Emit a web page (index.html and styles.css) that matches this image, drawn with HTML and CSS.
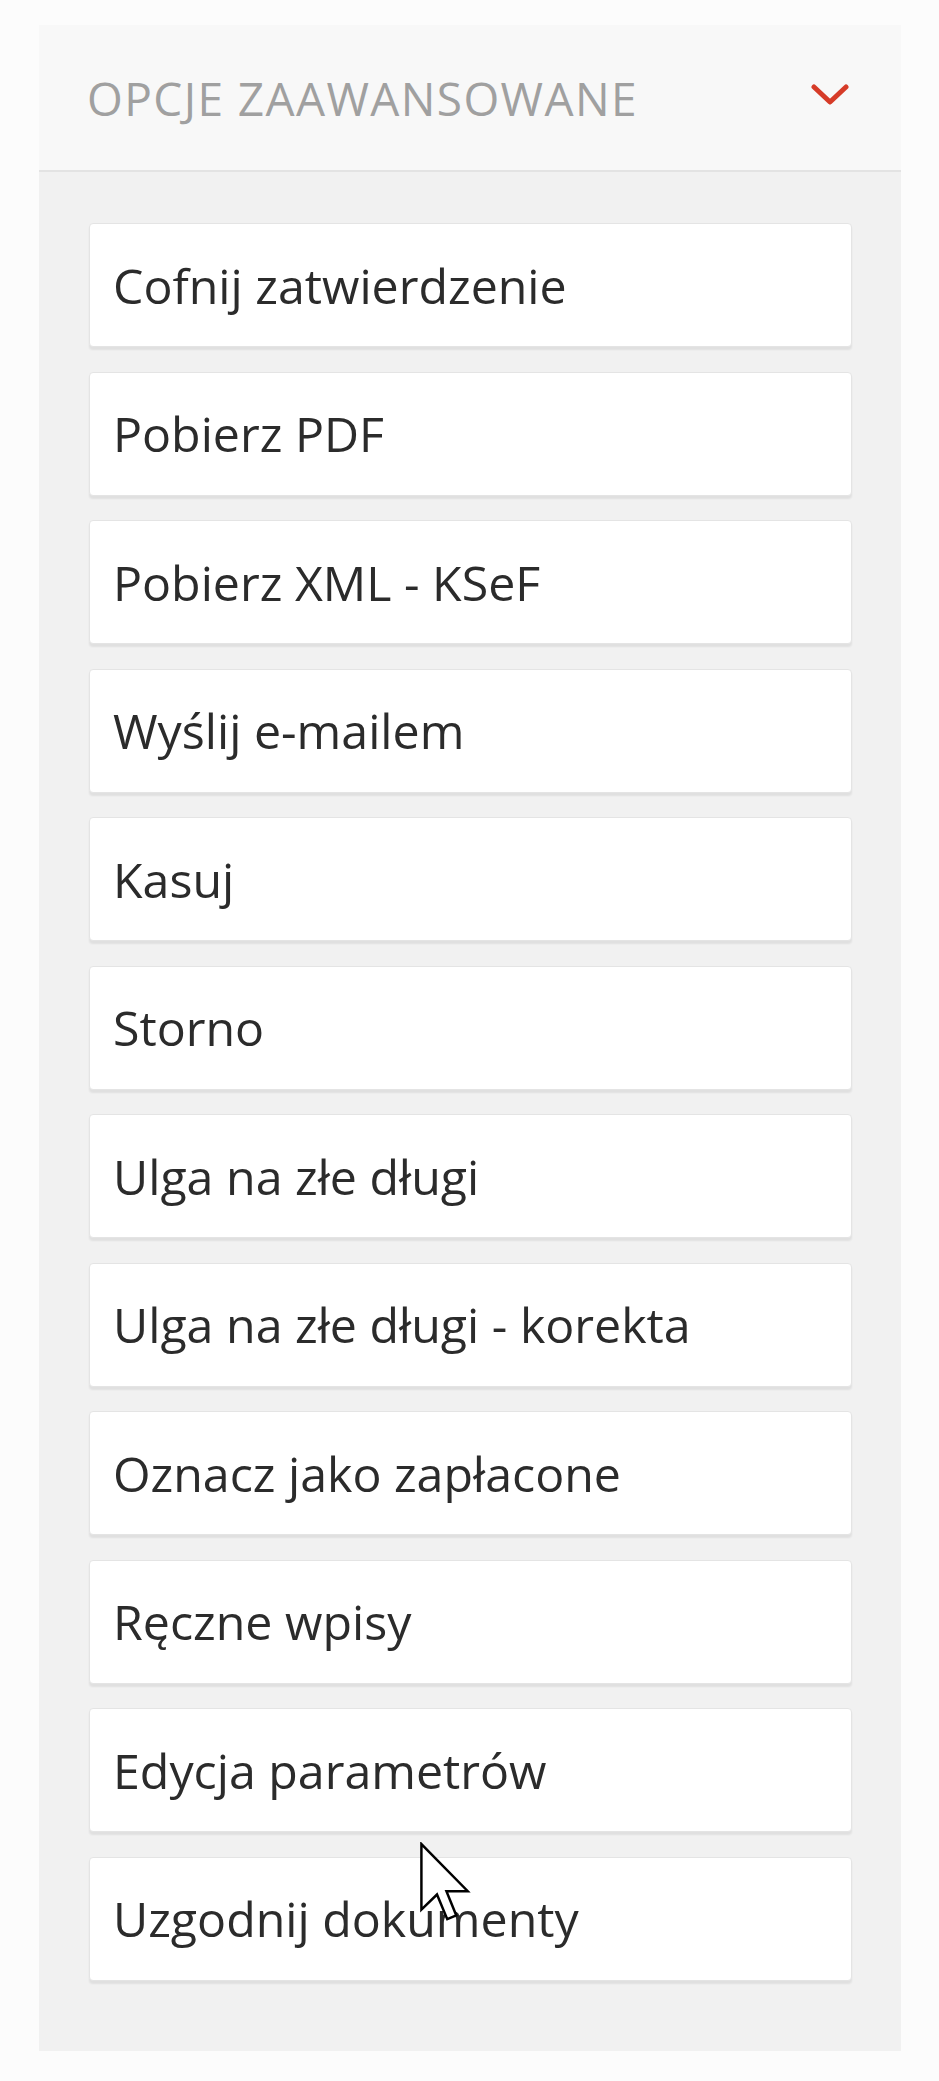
FILE: index.html
```html
<!DOCTYPE html>
<html lang="pl">
<head>
<meta charset="utf-8">
<title>Opcje zaawansowane</title>
<link rel="stylesheet" href="styles.css">
</head>
<body>
<div class="panel">
  <div class="header">
    <span class="title">OPCJE ZAAWANSOWANE</span>
    <svg class="chevron" width="38" height="22" viewBox="0 0 38 22"><path d="M3 3 L19 18 L35 3" fill="none" stroke="#d63b28" stroke-width="5" stroke-linecap="round" stroke-linejoin="round"/></svg>
  </div>
  <div class="list">
    <div class="btn">Cofnij zatwierdzenie</div>
    <div class="btn">Pobierz PDF</div>
    <div class="btn">Pobierz XML - KSeF</div>
    <div class="btn">Wyślij e-mailem</div>
    <div class="btn">Kasuj</div>
    <div class="btn">Storno</div>
    <div class="btn">Ulga na złe długi</div>
    <div class="btn">Ulga na złe długi - korekta</div>
    <div class="btn">Oznacz jako zapłacone</div>
    <div class="btn">Ręczne wpisy</div>
    <div class="btn">Edycja parametrów</div>
    <div class="btn">Uzgodnij dokumenty</div>
  </div>
</div>
<svg class="cursor" width="52" height="80" viewBox="0 0 12.5 19.5"><path d="M0.5 0.5 L0.5 16.5 L4.3 12.8 L6.8 18.8 L9 17.9 L6.6 12 L11.8 12 Z" fill="#fff" stroke="#000" stroke-width="0.6" stroke-linejoin="miter"/></svg>
</body>
</html>
```
FILE: styles.css
```css
html, body {
  margin: 0;
  padding: 0;
}
body {
  background: #fcfcfc;
  font-family: "Open Sans", "Liberation Sans", sans-serif;
  width: 939px;
  height: 2081px;
  overflow: hidden;
  position: relative;
}
.panel {
  margin: 25px 0 0 39px;
  width: 862px;
  background: #f1f1f1;
}
.header {
  height: 145px;
  background: #f8f8f8;
  border-bottom: 2px solid #e3e3e3;
  display: flex;
  align-items: center;
  justify-content: space-between;
  padding: 0 52px 0 48px;
}
.title {
  font-size: 46px;
  color: #a0a0a0;
  letter-spacing: 1.4px;
  line-height: 1;
}
.chevron {
  display: block;
  margin-top: -5px;
}
.list {
  display: flex;
  flex-direction: column;
  gap: 24.5px;
  padding: 51px 49px 70px 50px;
}
.btn {
  box-sizing: border-box;
  height: 124px;
  background: #fff;
  border: 1px solid #e4e4e4;
  border-radius: 4px;
  box-shadow: 0 3px 2px rgba(0, 0, 0, 0.07);
  display: flex;
  align-items: center;
  padding-left: 23px;
  font-size: 48.3px;
  color: #2b2b2b;
  line-height: 1;
}
.cursor {
  position: absolute;
  left: 419px;
  top: 1842px;
}
```
